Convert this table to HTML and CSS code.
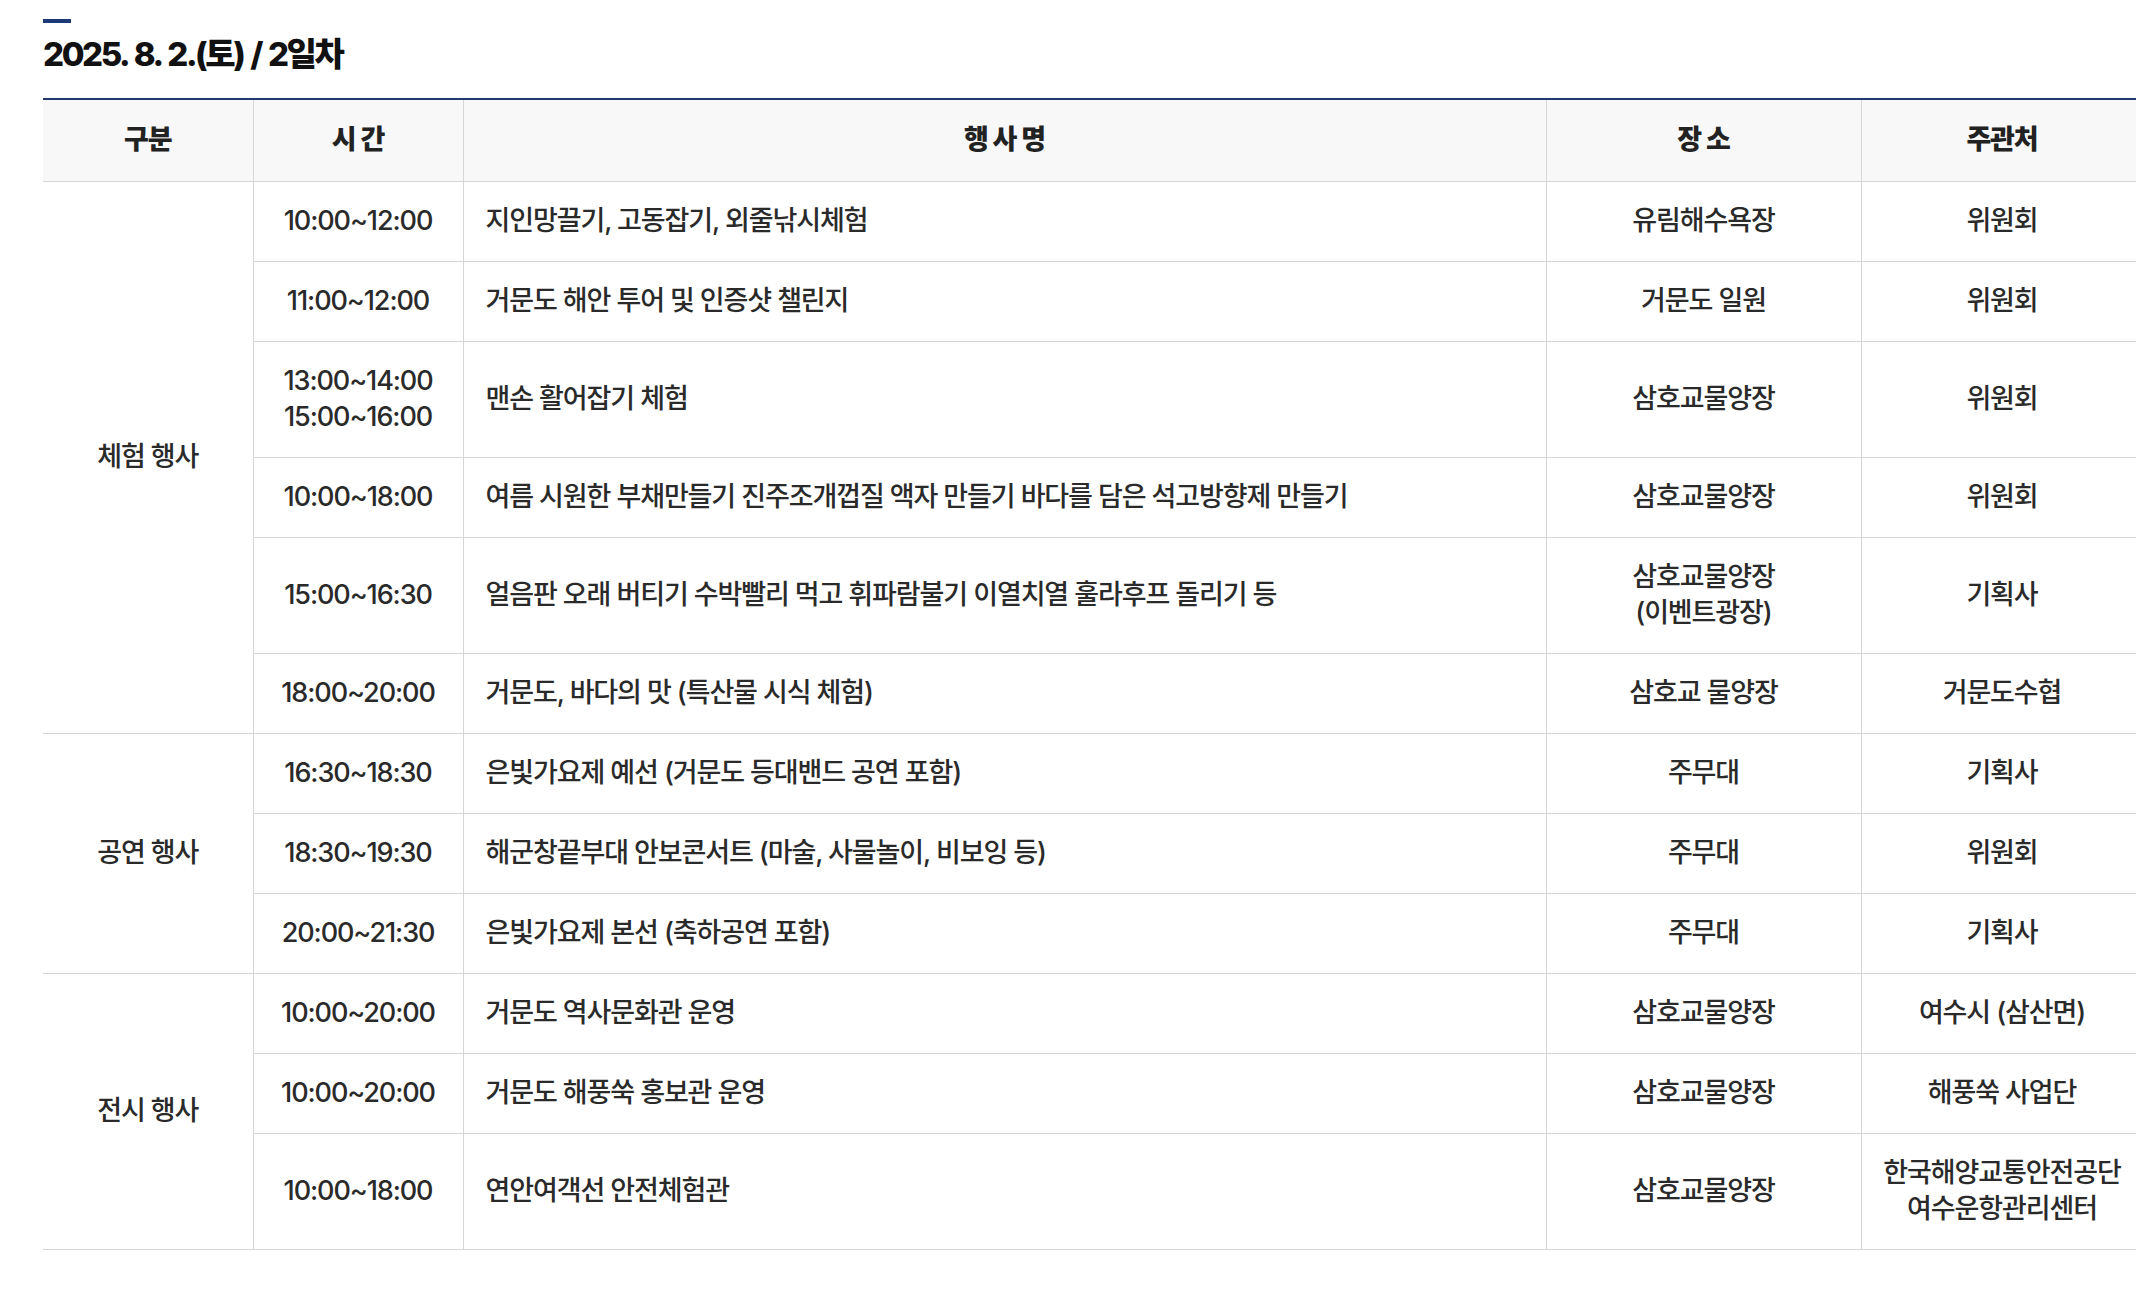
FILE: index.html
```html
<!DOCTYPE html>
<html lang="ko">
<head>
<meta charset="utf-8">
<title>2025. 8. 2.(토) / 2일차</title>
<link rel="stylesheet" href="styles.css">
</head>
<body>
<div class="page">
  <div class="title-bar"></div>
  <h2 class="day-title">2025. 8. 2.(토) / 2일차</h2>
  <div class="table-wrap">
    <table class="schedule">
      <colgroup>
        <col class="c-type">
        <col class="c-time">
        <col class="c-name">
        <col class="c-place">
        <col class="c-host">
      </colgroup>
      <thead>
        <tr>
          <th class="first">구분</th>
          <th>시 간</th>
          <th>행 사 명</th>
          <th>장 소</th>
          <th>주관처</th>
        </tr>
      </thead>
      <tbody>
        <tr>
          <td class="first" rowspan="6">체험 행사</td>
          <td>10:00~12:00</td>
          <td class="left">지인망끌기, 고동잡기, 외줄낚시체험</td>
          <td>유림해수욕장</td>
          <td>위원회</td>
        </tr>
        <tr>
          <td>11:00~12:00</td>
          <td class="left">거문도 해안 투어 및 인증샷 챌린지</td>
          <td>거문도 일원</td>
          <td>위원회</td>
        </tr>
        <tr>
          <td>13:00~14:00<br>15:00~16:00</td>
          <td class="left">맨손 활어잡기 체험</td>
          <td>삼호교물양장</td>
          <td>위원회</td>
        </tr>
        <tr>
          <td>10:00~18:00</td>
          <td class="left">여름 시원한 부채만들기 진주조개껍질 액자 만들기 바다를 담은 석고방향제 만들기</td>
          <td>삼호교물양장</td>
          <td>위원회</td>
        </tr>
        <tr>
          <td>15:00~16:30</td>
          <td class="left">얼음판 오래 버티기 수박빨리 먹고 휘파람불기 이열치열 훌라후프 돌리기 등</td>
          <td>삼호교물양장<br>(이벤트광장)</td>
          <td>기획사</td>
        </tr>
        <tr>
          <td>18:00~20:00</td>
          <td class="left">거문도, 바다의 맛 (특산물 시식 체험)</td>
          <td>삼호교 물양장</td>
          <td>거문도수협</td>
        </tr>
        <tr>
          <td class="first" rowspan="3">공연 행사</td>
          <td>16:30~18:30</td>
          <td class="left">은빛가요제 예선 (거문도 등대밴드 공연 포함)</td>
          <td>주무대</td>
          <td>기획사</td>
        </tr>
        <tr>
          <td>18:30~19:30</td>
          <td class="left">해군창끝부대 안보콘서트 (마술, 사물놀이, 비보잉 등)</td>
          <td>주무대</td>
          <td>위원회</td>
        </tr>
        <tr>
          <td>20:00~21:30</td>
          <td class="left">은빛가요제 본선 (축하공연 포함)</td>
          <td>주무대</td>
          <td>기획사</td>
        </tr>
        <tr>
          <td class="first" rowspan="3">전시 행사</td>
          <td>10:00~20:00</td>
          <td class="left">거문도 역사문화관 운영</td>
          <td>삼호교물양장</td>
          <td>여수시 (삼산면)</td>
        </tr>
        <tr>
          <td>10:00~20:00</td>
          <td class="left">거문도 해풍쑥 홍보관 운영</td>
          <td>삼호교물양장</td>
          <td>해풍쑥 사업단</td>
        </tr>
        <tr>
          <td>10:00~18:00</td>
          <td class="left">연안여객선 안전체험관</td>
          <td>삼호교물양장</td>
          <td>한국해양교통안전공단<br>여수운항관리센터</td>
        </tr>
      </tbody>
    </table>
  </div>
</div>
</body>
</html>
```

FILE: styles.css
```css
html, body {
  margin: 0;
  padding: 0;
  background: #fff;
}
body {
  font-family: Inter, "Noto Sans CJK KR", sans-serif;
  color: #333;
  overflow: hidden;
}
.page {
  padding: 19px 0 0 43px;
  overflow: hidden;
}
.title-bar {
  width: 28px;
  height: 4px;
  background: #1c3a78;
}
.day-title {
  margin: 11px 0 0;
  font-size: 33px;
  line-height: 40px;
  font-weight: 800;
  letter-spacing: -2.4px;
  word-spacing: 2px;
  color: #111;
}
.table-wrap {
  margin-top: 24px;
  width: 2100px;
}
.schedule {
  width: 2100px;
  border-collapse: collapse;
  table-layout: fixed;
  border-top: 2px solid #25386e;
}
.c-type { width: 210px; }
.c-time { width: 210px; }
.c-name { width: 1083px; }
.c-place { width: 315px; }
.c-host { width: 282px; }
.schedule th,
.schedule td {
  border: 1px solid #d6d6d6;
  padding: 21px 6px 22px;
  line-height: 36px;
  font-size: 27px;
  letter-spacing: -1.1px;
  text-align: center;
  vertical-align: middle;
}
.schedule th {
  background: #f8f8f8;
  color: #222;
  font-weight: 800;
  padding: 22px 6px 23px;
  border-top: none;
}
.schedule td {
  color: #2a2a2a;
  font-weight: 500;
}
.schedule .first {
  border-left: none;
}
.schedule td.left {
  text-align: left;
  padding-left: 22px;
}
```
